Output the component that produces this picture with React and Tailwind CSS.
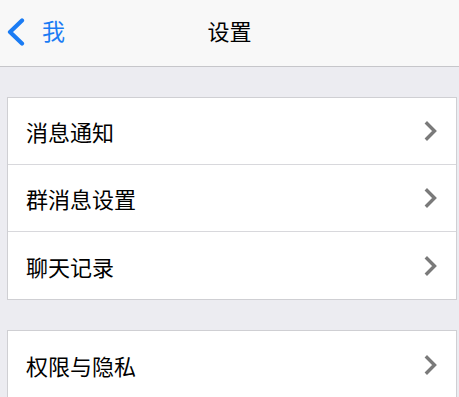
const groups = [
  ['消息通知', '群消息设置', '聊天记录'],
  ['权限与隐私'],
]

const Chevron = () => (
  <svg width="14" height="20" viewBox="0 0 14 20" className="shrink-0">
    <polyline points="3,2.5 10.5,10 3,17.5" fill="none" stroke="#7a7a7a" strokeWidth="3.4" strokeLinecap="square" strokeLinejoin="miter" />
  </svg>
)

const App = () => {
  return (
    <div
      className="w-[459px] h-[397px] overflow-hidden bg-[#ececf1]"
      style={{ fontFamily: '"Noto Sans CJK SC", "Noto Sans", sans-serif' }}
    >
      <div className="relative h-[67px] pb-[6px] bg-[#f8f8f8] border-b border-[#c6c6ca] flex items-center justify-center">
        <div className="absolute left-[6px] top-0 h-[60px] flex items-center gap-[16px]">
          <svg width="20" height="28" viewBox="0 0 20 28" className="mt-[3px]">
            <polyline points="16,2.5 4,14 16,25.5" fill="none" stroke="#1b7cf4" strokeWidth="4.2" strokeLinecap="round" strokeLinejoin="round" />
          </svg>
          <span className="text-[23px] leading-none text-[#1b7cf4]">我</span>
        </div>
        <span className="text-[22px] leading-none text-black">设置</span>
      </div>

      {groups.map((rows, gi) => (
        <div key={gi} className="mt-[30px] ml-[7px] mr-[2px] bg-white border border-[#cfcfd3]">
          {rows.map((label, i) => (
            <div
              key={label}
              className={`h-[67px] flex items-center justify-between pl-[18px] pr-[18px] ${i < rows.length - 1 ? 'border-b border-[#d8d8dc]' : ''}`}
            >
              <span className="text-[22px] leading-none text-black">{label}</span>
              <Chevron />
            </div>
          ))}
        </div>
      ))}
    </div>
  )
}

export default App
